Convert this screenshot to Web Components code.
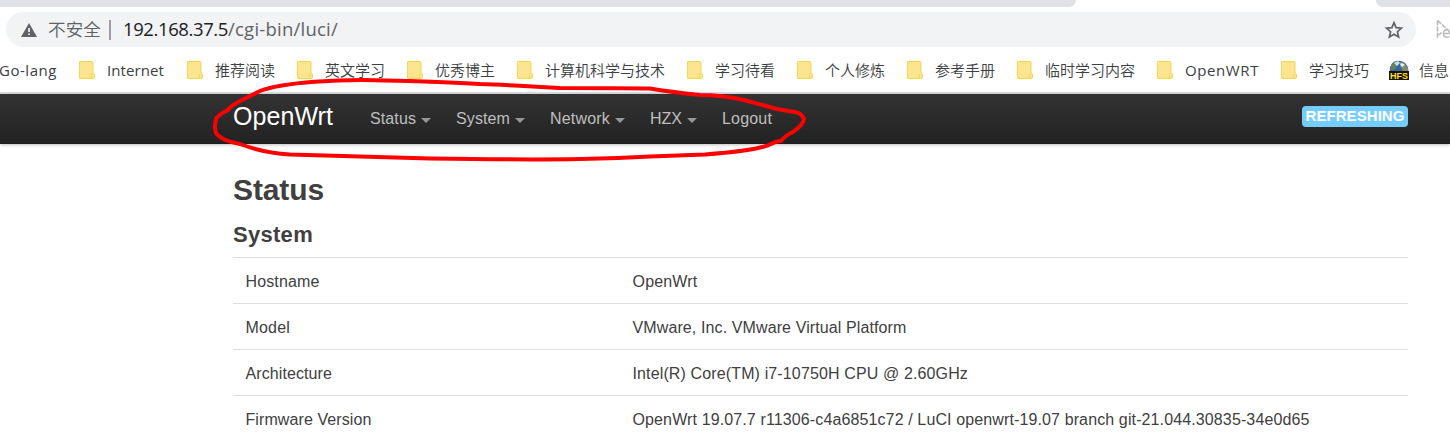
<!DOCTYPE html>
<html lang="zh-CN">
<head>
<meta charset="utf-8">
<title>OpenWrt - LuCI</title>
<style>
html,body{margin:0;height:440px;overflow:hidden;background:#fff}
body{font-family:"Liberation Sans",Arial,sans-serif;color:#404040}
</style>
</head>
<body>
<luci-window></luci-window>
<script>
const define = (name, html, setup) => {
  const t = document.createElement('template');
  t.innerHTML = html;
  customElements.define(name, class extends HTMLElement {
    connectedCallback() {
      if (this.shadowRoot) return;
      this.attachShadow({mode: 'open'}).append(t.content.cloneNode(true));
      if (setup) setup.call(this, this.shadowRoot);
    }
  });
};

// Text tracked so that its advance equals the width attribute.
define('fit-text', `<style>:host{display:inline-block;white-space:nowrap}span{display:inline-block}</style><span><slot></slot></span>`, function (root) {
  const span = root.querySelector('span');
  const w = +this.getAttribute('w'), n = this.textContent.length;
  if (w) {
    const natural = span.getBoundingClientRect().width;
    this.style.width = w + 'px';
    span.style.letterSpacing = (w - natural) / n + 'px';
  }
});

define('tab-edge', `<style>
:host{display:flex;justify-content:space-between;height:7px;background:#fff}
i{background:#dee1e6;height:7px}
.l{width:1076px;border-bottom-right-radius:8px 8px}.r{width:74px;border-bottom-left-radius:8px 8px}
</style><i class="l"></i><i class="r"></i>`);

define('address-bar', `<style>
:host{display:flex;height:45px;padding:5px 0 0 6px;box-sizing:border-box;font:18.5px/35px "Open Sans","Noto Sans CJK SC",sans-serif;color:#5f6368}
.pill{display:flex;width:1410px;height:35px;border-radius:18px;background:#f1f3f4;box-sizing:border-box;padding-left:15px;align-items:center;flex:none}
.pill fit-text{height:37px}
.warn{width:16px;height:16px;margin-right:11px}
.cn{font-family:"Noto Sans CJK SC",sans-serif;font-weight:350;font-size:17.6px}
.sep{width:2px;height:20px;background:#9b9da0;margin:0 12px 0 8px}
.host{color:#202124}.grow{flex:1}
.star{width:20px;height:20px;margin-right:12px}
.ext{width:14px;height:22px;margin:7px 0 0 20px;flex:none}
</style>
<div class="pill"><svg class="warn" viewBox="0 0 16 16"><path d="M8 1 16 15H0Z" fill="#5f6368"/><path d="M7.2 6h1.700v4H7.200zM7.200 11.500h1.700v1.600H7.200z" fill="#f1f3f4"/></svg>
<fit-text class="cn" w="53">不安全</fit-text><i class="sep"></i><fit-text class="host" w="105">192.168.37.5</fit-text><fit-text w="110">/cgi-bin/luci/</fit-text><span class="grow"></span>
<svg class="star" viewBox="0 0 20 20"><path d="m10 2.600 2.100 5 5.400.500-4.100 3.600 1.200 5.300-4.600-2.800L5.400 17l1.200-5.300-4.100-3.600 5.400-.500Z" fill="none" stroke="#5f6368" stroke-width="1.700"/></svg></div>
<svg class="ext" viewBox="0 0 14 22"><path d="M1.500 1.500v16l4-4M1.500 1.500l10 9-4 1.500" fill="none" stroke="#bcbdc1" stroke-width="1.700" stroke-dasharray="5 1"/><path d="M7.500 14.500h6c0-5-6-5-6 0 0 4 4 4.500 6 3" fill="none" stroke="#bcbdc1" stroke-width="1.500"/></svg>`);

define('folder-icon', `<style>:host{display:block;width:16px;height:18px}svg{display:block}</style>
<svg width="16" height="18" viewBox="0 0 16 18"><path d="M1 .5h12q1 0 1 1V12q1.500.500 1.500 2v2q0 1.500-1.500 1.500H1q-.500 0-.500-.500V1Q.500.500 1 .500Z" fill="#fbe68f" stroke="#f4d653"/><path d="M13.500 12.500q-1 .500-1 2v2.500" fill="none" stroke="#f4d653"/></svg>`);

define('hfs-icon', `<style>:host{display:block;width:20px;height:20px}svg{display:block}</style>
<svg width="20" height="20" viewBox="0 0 20 20"><circle cx="10" cy="10" r="9.300" fill="#3267a5"/><path d="M2 5Q5 0 10 1l-1 4-4 5H1Z" fill="#667e64"/><path d="m5 3 4-2 2 2-3 3Z" fill="#c9ddeb"/><path d="m11 2 4 1 4 5v3h-5l-3-5Z" fill="#7f8c72"/><path d="m13 3 3 2-3 2-2-3Z" fill="#e3edf5"/><path d="M0 11h20v9H0z" fill="#201006"/><text x="1" y="18.800" textLength="18" lengthAdjust="spacingAndGlyphs" font-family="Liberation Sans" font-size="9.500" font-weight="700" fill="#f5e52b">HFS</text></svg>`);

define('book-mark', `<style>
:host{display:grid;grid-template-columns:28px 1fr;align-items:center;flex:none;height:32px}
</style><slot name="icon"><folder-icon></folder-icon></slot><slot></slot>`, function () { this.style.width = this.getAttribute('size') + 'px'; });

define('bookmark-bar', `<style>
:host{display:flex;height:40px;box-sizing:border-box;border-bottom:2px solid #dadce0;overflow:hidden;font:15px/32px "Open Sans","Noto Sans CJK SC",sans-serif;color:#3c4043}
.first{width:80px;flex:none;margin-left:-1px}
.items{display:flex}
.cn{font-family:"Noto Sans CJK SC",sans-serif;font-weight:350}
.last{margin-left:2px}
</style><div class="first"><fit-text w="58">Go-lang</fit-text></div><div class="items"></div>`, function (root) {
  const marks = [['Internet',108,57],['推荐阅读',110,60],['英文学习',110,60],['优秀博主',110,60],['计算机科学与技术',170,120],['学习待看',110,60],['个人修炼',110,60],['参考手册',110,60],['临时学习内容',140,90],['OpenWRT',124,74],['学习技巧',108,60],['信息',62,30]];
  root.querySelector('.items').innerHTML = marks.map(([s, w, t]) => `<book-mark size="${w}">${s === '信息' ? '<hfs-icon slot="icon"></hfs-icon>' : ''}<fit-text w="${t}" class="${/[a-z]/i.test(s) ? '' : 'cn'}${s === '信息' ? ' last' : ''}">${s}</fit-text></book-mark>`).join('');
});

define('menu-item', `<style>
:host{display:flex;align-items:center;height:50px;font-size:16px;color:#bfbfbf;flex:none}
i{border:5px solid transparent;border-top-color:#969696;border-bottom:0;margin:2px 0 0 5px}
:host([plain]) i{display:none}
</style><slot></slot><i></i>`);

define('site-header', `<style>
:host{display:flex;height:50px;padding:0 42px 0 233px;background:linear-gradient(#333,#222);box-shadow:0 1px 3px rgba(0,0,0,.25),inset 0 -1px 0 rgba(0,0,0,.1)}
.brand{font-size:25px;line-height:45px;color:#fff;margin-right:37px}
nav{display:flex;gap:25px;flex:1}
.poll{align-self:flex-start;margin-top:12px;width:106px;height:21px;border-radius:4px;background:#75cdff;color:#fff;font-weight:700;font-size:15px;line-height:20px;text-align:center}
</style><fit-text class="brand" w="100">OpenWrt</fit-text>
<nav><menu-item><fit-text w="46">Status</fit-text></menu-item><menu-item><fit-text w="54">System</fit-text></menu-item><menu-item><fit-text w="60">Network</fit-text></menu-item><menu-item><fit-text w="32">HZX</fit-text></menu-item><menu-item plain><fit-text w="50">Logout</fit-text></menu-item></nav>
<div class="poll"><fit-text w="99">REFRESHING</fit-text></div>`);

define('info-row', `<style>
:host{display:grid;grid-template-columns:387px 1fr;height:46px;box-sizing:border-box;border-top:1px solid #ddd;padding:2px 0 0 12.500px;align-items:center;font-size:16px;line-height:22px}
</style><slot name="key"></slot><slot></slot>`);

define('status-page', `<style>
:host{display:block;padding:27px 42px 0 233px}
h2{margin:0;font-size:30px;line-height:38px}h3{margin:9px 0 0;font-size:22px;line-height:33px;height:39px;color:#404040}
h3 fit-text{vertical-align:top}
</style><h2><fit-text w="91">Status</fit-text></h2><h3><fit-text w="80">System</fit-text></h3>
<info-row><fit-text slot="key" w="74">Hostname</fit-text><fit-text w="65">OpenWrt</fit-text></info-row>
<info-row><fit-text slot="key" w="44.5">Model</fit-text><fit-text w="274">VMware, Inc. VMware Virtual Platform</fit-text></info-row>
<info-row><fit-text slot="key" w="86.5">Architecture</fit-text><fit-text w="335.5">Intel(R) Core(TM) i7-10750H CPU @ 2.60GHz</fit-text></info-row>
<info-row><fit-text slot="key" w="126">Firmware Version</fit-text><fit-text w="677">OpenWrt 19.07.7 r11306-c4a6851c72 / LuCI openwrt-19.07 branch git-21.044.30835-34e0d65</fit-text></info-row>`);

// Freehand loop drawn over the navigation.
define('red-loop', `<style>:host{position:absolute;left:0;top:0;pointer-events:none}svg{display:block}</style>
<svg width="1450" height="200"><path d="M386 80.500C340 79 284 82 260 91Q248 97 242 100Q230 106 228 110Q218 115 216 119Q213 133 219 136Q224 141 240 144Q264 153 290 154.500L360 156.500L430 158.500Q530 160 580 159Q620 158 650 156.500L705 154.500Q760 150 771 144Q776 141 781 141Q786 135 793 132Q804 124 804 119Q801 113 797 112.500L777 109L744 100Q722 95 700 95Q670 92 650 88.500Q620 88 560 88Q510 85 480 84Q430 81 386 80.500Z" fill="none" stroke="#f00" stroke-width="4" stroke-linejoin="round"/></svg>`);

define('luci-window', `<style>:host{display:flow-root;position:relative;width:1450px;height:440px;overflow:hidden;background:#fff}</style>
<tab-edge></tab-edge><address-bar></address-bar><bookmark-bar style="margin-top:2px"></bookmark-bar><site-header></site-header><status-page></status-page><red-loop></red-loop>`);
</script>
</body>
</html>
